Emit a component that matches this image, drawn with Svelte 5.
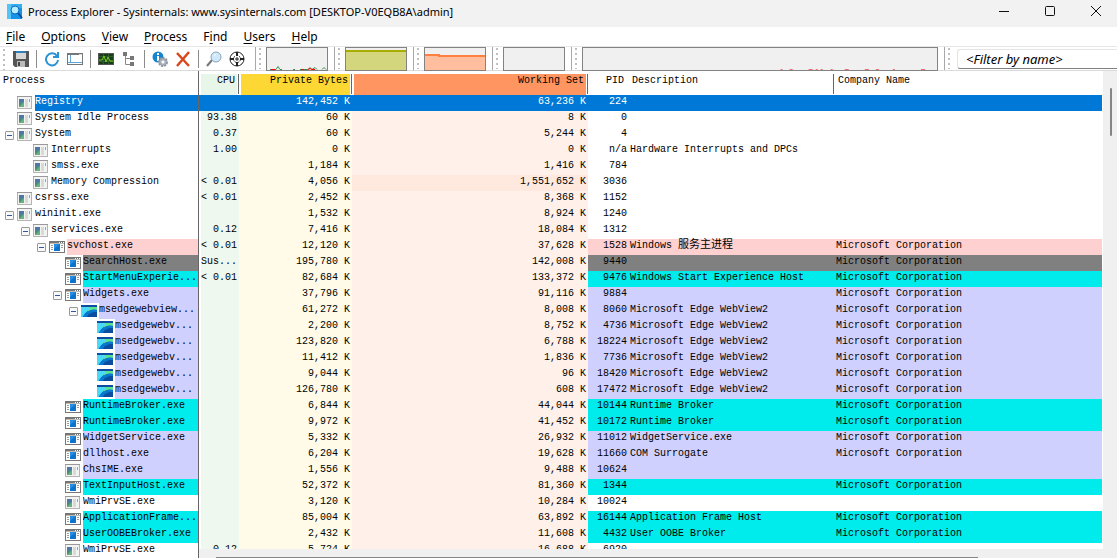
<script>
	const menus = ['File', 'Options', 'View', 'Process', 'Find', 'Users', 'Help'];
	// position of the underlined access key in each menu label
	const accessKey = { Find: 1 };

	const ms = 'Microsoft Corporation';
	const edge = 'Microsoft Edge WebView2';

	// depth, icon, name, cpu, private bytes, working set, pid, description, company, colour, open
	const processes = [
		[0, 'sys', 'Registry', '', '142,452', '63,236', '224', '', '', 'selected'],
		[0, 'sys', 'System Idle Process', '93.38', '60', '8', '0'],
		[0, 'sys', 'System', '0.37', '60', '5,244', '4', '', '', '', true],
		[1, 'sys', 'Interrupts', '1.00', '0', '0', 'n/a', 'Hardware Interrupts and DPCs'],
		[1, 'sys', 'smss.exe', '', '1,184', '1,416', '784'],
		[1, 'sys', 'Memory Compression', '< 0.01', '4,056', '1,551,652', '3036'],
		[0, 'sys', 'csrss.exe', '< 0.01', '2,452', '8,368', '1152'],
		[0, 'sys', 'wininit.exe', '', '1,532', '8,924', '1240', '', '', '', true],
		[1, 'sys', 'services.exe', '0.12', '7,416', '18,084', '1312', '', '', '', true],
		[2, 'app', 'svchost.exe', '< 0.01', '12,120', '37,628', '1528', 'Windows', ms, 'service', true, '服务主进程'],
		[3, 'app', 'SearchHost.exe', 'Sus...', '195,780', '142,008', '9440', '', ms, 'suspended'],
		[3, 'app', 'StartMenuExperie...', '< 0.01', '82,684', '133,372', '9476', 'Windows Start Experience Host', ms, 'immersive'],
		[3, 'app', 'Widgets.exe', '', '37,796', '91,116', '9884', '', ms, 'own', true],
		[4, 'edge', 'msedgewebview...', '', '61,272', '8,008', '8060', edge, ms, 'own', true],
		[5, 'edge', 'msedgewebv...', '', '2,200', '8,752', '4736', edge, ms, 'own'],
		[5, 'edge', 'msedgewebv...', '', '123,820', '6,788', '18224', edge, ms, 'own'],
		[5, 'edge', 'msedgewebv...', '', '11,412', '1,836', '7736', edge, ms, 'own'],
		[5, 'edge', 'msedgewebv...', '', '9,044', '96', '18420', edge, ms, 'own'],
		[5, 'edge', 'msedgewebv...', '', '126,780', '608', '17472', edge, ms, 'own'],
		[3, 'app', 'RuntimeBroker.exe', '', '6,844', '44,044', '10144', 'Runtime Broker', ms, 'immersive'],
		[3, 'app', 'RuntimeBroker.exe', '', '9,972', '41,452', '10172', 'Runtime Broker', ms, 'immersive'],
		[3, 'app', 'WidgetService.exe', '', '5,332', '26,932', '11012', 'WidgetService.exe', ms, 'own'],
		[3, 'app', 'dllhost.exe', '', '6,204', '19,628', '11660', 'COM Surrogate', ms, 'own'],
		[3, 'sys', 'ChsIME.exe', '', '1,556', '9,488', '10624', '', '', 'own'],
		[3, 'app', 'TextInputHost.exe', '', '52,372', '81,360', '1344', '', ms, 'immersive'],
		[3, 'sys', 'WmiPrvSE.exe', '', '3,120', '10,284', '10024'],
		[3, 'app', 'ApplicationFrame...', '', '85,004', '63,892', '16144', 'Application Frame Host', ms, 'immersive'],
		[3, 'app', 'UserOOBEBroker.exe', '', '2,432', '11,608', '4432', 'User OOBE Broker', ms, 'immersive'],
		[3, 'sys', 'WmiPrvSE.exe', '0.12', '5,724', '16,688', '6920']
	].map(([depth, icon, name, cpu, priv, ws, pid, desc = '', company = '', color = '', open = false, local = '']) => ({
		depth, icon, name, cpu, priv, ws, pid, desc, company, color, open, local
	}));

	let filter = $state('');
</script>

{#snippet processIcon(kind)}
	<svg class="proc-icon" width="16" height="16" aria-hidden="true">
		{#if kind === 'sys'}
			<rect x="0.5" y="1.5" width="14" height="12" fill="#f3f3f3" stroke="#b4b4b4" />
			<path d="M0 1.5h15" stroke="#999" />
			<rect x="2" y="4" width="5" height="8" fill="#4b8f83" />
			<path d="M2 4h5v2L2 9z" fill="#5078a4" />
			<path d="M2 12l5-5v5z" fill="#69b17b" />
			<rect x="8" y="4" width="3" height="8" fill="#d9d9d9" />
			<path d="M12.5 4v3" stroke="#87b3a2" />
		{:else if kind === 'app'}
			<rect x="0.5" y="2.5" width="15" height="11" fill="#fff" stroke="#777" />
			<path d="M0 3.5h16" stroke="#777" stroke-width="2" />
			<path d="M10 3.5h1M12 3.5h1M14 3.5h1" stroke="#fff" />
			<path d="M2 6.5h2M2 8.5h2M2 10.5h2M12 6.5h2M12 8.5h2" stroke="#999" />
			<rect x="5" y="5" width="6" height="7" fill="#0d73cf" />
			<path d="M5 5h6L5 10z" fill="#258de0" />
		{:else}
			<rect y="2" width="16" height="12" fill="#0c4da2" />
			<path d="M0 4h16v3C9 5 5 9 2 14H0z" fill="#35c1f1" />
			<path d="M7 4h9v3c-4-1-7 0-9 2z" fill="#5ee08c" />
			<path d="M0 4h7l3 2C6 7 3 10 1 14H0z" fill="#4bd9f5" />
			<path d="M2 14C5 8 10 6 16 7v2C10 9 7 11 6 14z" fill="#0878d1" />
		{/if}
	</svg>
{/snippet}

{#snippet grip()}
	<svg class="grip" width="2" height="22" aria-hidden="true">
		<path d="M1 1v22" stroke="#bfbfbf" stroke-width="2" stroke-dasharray="2 3" />
	</svg>
{/snippet}

<div class="window">
	<header class="titlebar">
		<svg width="16" height="16" aria-hidden="true">
			<rect width="15" height="15" y="1" fill="#1593e6" />
			<path d="M0 1h4v15H0z" fill="#52c4f5" />
			<path d="M4 1h11v4H4z" fill="#35aef0" />
			<circle cx="8" cy="7" r="4" fill="#b8ecff" stroke="#096bc0" stroke-width="1" />
			<path d="M11 10l4 5" stroke="#064f9f" stroke-width="2" />
		</svg>
		<h1>Process Explorer - Sysinternals: www.sysinternals.com [DESKTOP-V0EQB8A\admin]</h1>
		<div class="controls">
			<button aria-label="Minimize"><svg width="12" height="12"><path d="M1 6.5h10" /></svg></button>
			<button aria-label="Maximize"><svg width="12" height="12"><rect x="1.5" y="1.5" width="9" height="9" rx="1" /></svg></button>
			<button aria-label="Close"><svg width="12" height="12"><path d="M1 1l10 10M11 1L1 11" /></svg></button>
		</div>
	</header>

	<nav class="menubar">
		{#each menus as menu}
			{@const k = accessKey[menu] ?? 0}
			<button>{menu.slice(0, k)}<u>{menu[k]}</u>{menu.slice(k + 1)}</button>
		{/each}
	</nav>

	<div class="toolbar">
		<div class="tools">
			{@render grip()}
			<button class="first" aria-label="Save">
				<svg width="16" height="16">
					<path d="M0 0h16v16H2l-2-2z" fill="#555" />
					<rect x="3" width="10" height="8" fill="#d6d6d6" />
					<path d="M3 1h10" stroke="#2f7fb8" stroke-width="2" />
					<path d="M4 10h8v6H4z" fill="#bbb" />
					<path d="M5 11h2v4H5z" fill="#444" />
				</svg>
			</button>
			<span class="sep"></span>
			<button aria-label="Refresh now">
				<svg width="16" height="16" fill="none" stroke="#2a93d5" stroke-width="2">
					<path d="M13 5A6 6 0 1 0 14 9" />
					<path d="M14 1v5H9" />
				</svg>
			</button>
			<button aria-label="Show lower pane">
				<svg width="16" height="16">
					<rect x="0.5" y="2.5" width="15" height="11" fill="#fff" stroke="#777" />
					<path d="M0 3h16" stroke="#777" stroke-width="2" />
					<path d="M12 3.5h3" stroke="#ddd" />
					<path d="M1 11.5h14M3.5 4v7" stroke="#59a7dc" />
				</svg>
			</button>
			<span class="sep"></span>
			<button aria-label="System information">
				<svg width="16" height="16">
					<rect x="0.5" y="2.5" width="15" height="11" fill="#193e19" stroke="#555" />
					<path d="M1 5.5h14M1 10.5h14M5.5 3v10M10.5 3v10" stroke="#315b31" />
					<path d="M1 9h3l2-4 2 6 2-5 2 4h3" fill="none" stroke="#73d11c" />
				</svg>
			</button>
			<button aria-label="Show process tree">
				<svg width="16" height="16">
					<path d="M4.5 3v10.5H9M4.5 7.5H9" fill="none" stroke="#888" />
					<path d="M2 1h4v4H2zM9 5h4v4H9zM9 11h4v4H9z" fill="#777" />
				</svg>
			</button>
			<span class="sep"></span>
			<button aria-label="Properties">
				<svg width="16" height="16">
					<circle cx="6" cy="6" r="5.5" fill="#1684cf" />
					<path d="M6 2v2M6 5v5" stroke="#fff" stroke-width="2" />
					<circle cx="11" cy="11" r="4" fill="#aab2bb" stroke="#8f99a4" stroke-width="2" stroke-dasharray="2 1" />
					<circle cx="11" cy="11" r="1.5" fill="#fff" />
				</svg>
			</button>
			<button aria-label="Kill process">
				<svg width="16" height="16">
					<path d="M2 2l12 13M14 1L2 15" stroke="#d9481c" stroke-width="2.5" />
				</svg>
			</button>
			<span class="sep"></span>
			<button aria-label="Find handle or DLL">
				<svg width="16" height="16">
					<path d="M1 15l5-6" stroke="#777" stroke-width="2" />
					<circle cx="10" cy="6" r="5" fill="#cfe9fb" stroke="#88a5bb" />
					<path d="M8 5l2-2" stroke="#fff" />
				</svg>
			</button>
			<button aria-label="Find window's process">
				<svg width="16" height="16" fill="none" stroke="#222">
					<circle cx="8" cy="8" r="7" />
					<circle cx="8" cy="8" r="3.5" stroke-dasharray="2 1" />
					<path d="M8 1v4M8 11v4M1 8h4M11 8h4" stroke-width="2" />
					<path d="M6 8h4M8 6v4" />
				</svg>
			</button>
		</div>

		<div class="band">
			{@render grip()}
			<svg class="graph" width="60" height="22" role="img" aria-label="CPU usage">
				<path d="M3 21.5h6l2-3 2 3h2M26 21.5h2M33 21.5h8l2-2 2 2 3-2 2 2M55 21.5l2-2 2 2" fill="none" stroke="#3c8e4a" />
				<path d="M4 21.5h4M34 21.5h3M41 21.5l2-1 2 1h3" fill="none" stroke="#f00" />
			</svg>
		</div>
		<div class="band">
			{@render grip()}
			<svg class="graph" width="60" height="22" role="img" aria-label="System commit">
				<rect y="3" width="60" height="19" fill="#d4d67d" />
				<path d="M0 3h60" stroke="#aaad00" stroke-width="2" />
			</svg>
		</div>
		<div class="band">
			{@render grip()}
			<svg class="graph" width="60" height="22" role="img" aria-label="Physical memory">
				<path d="M0 7h14v1h46v14H0z" fill="#ffbe9e" />
				<path d="M0 7h14v1h46" fill="none" stroke="#ff8040" stroke-width="2" />
			</svg>
		</div>
		<div class="band">
			{@render grip()}
			<svg class="graph" width="60" height="22" role="img" aria-label="I/O"></svg>
		</div>
		<div class="band wide">
			{@render grip()}
			<svg class="graph" viewBox="0 0 353 22" preserveAspectRatio="none" role="img" aria-label="GPU usage">
				<path d="M197 21.5h2M206 21.5h3M225 21.5h4M232 21.5h2M237 21.5h2M247 21.5h2M261 21.5h4M281 21.5h4M292 21.5h3M309 21.5h2M337 21.5h4" stroke="#f26c6c" />
			</svg>
		</div>
		<div class="band">
			{@render grip()}
			<input type="text" placeholder="<Filter by name>" aria-label="Filter by name" bind:value={filter} />
		</div>
	</div>

	<main class="panes">
		<section class="tree-pane">
			<table>
				<thead>
					<tr><th><div class="head"><span>Process</span></div></th></tr>
				</thead>
				<tbody>
					{#each processes as p}
						<tr class={p.color}>
							<td>
								<div class="node" style:padding-left="{p.depth * 16 + 5}px">
									<span class="slot">
										{#if p.open}
											<button class="expander" aria-label="Collapse {p.name}">
												<svg width="9" height="9"><path d="M2 4.5h5" stroke="#3158a6" /></svg>
											</button>
										{/if}
									</span>
									{@render processIcon(p.icon)}
									<span class="name">{p.name}</span>
								</div>
							</td>
						</tr>
					{/each}
				</tbody>
			</table>
		</section>

		<section class="detail-pane">
			<div class="detail-view">
				<table>
					<colgroup>
						<col class="c-cpu" />
						<col class="c-priv" />
						<col class="c-ws" />
						<col class="c-pid" />
						<col class="c-desc" />
						<col />
					</colgroup>
					<thead>
						<tr>
							<th class="num cpu"><div class="head line"><span>CPU</span></div></th>
							<th class="num priv"><div class="head line"><span>Private Bytes</span></div></th>
							<th class="num ws"><div class="head line"><span>Working Set</span></div></th>
							<th class="num"><div class="head pid"><span>PID</span></div></th>
							<th><div class="head line"><span>Description</span></div></th>
							<th><div class="head"><span>Company Name</span></div></th>
						</tr>
					</thead>
					<tbody>
						{#each processes as p}
							<tr class={p.color}>
								<td class="num cpu">{p.cpu}</td>
								<td class="num priv">{p.priv} K</td>
								<td class="num ws" class:hot={p.ws.length > 7}>{p.ws} K</td>
								<td class="num pid">{p.pid}</td>
								<td>{p.desc}{#if p.local}{' '}<span class="cjk" lang="zh-CN">{p.local}</span>{/if}</td>
								<td>{p.company}</td>
							</tr>
						{/each}
					</tbody>
				</table>
			</div>
			<div class="hscroll"><div class="thumb"></div></div>
		</section>
		<div class="vscroll"><div class="thumb"></div></div>
	</main>
</div>

<style>
	:global(body) {
		margin: 0;
		overflow: hidden;
	}

	.window {
		display: flex;
		flex-direction: column;
		height: 100vh;
		background: #fff;
		color: #000;
		font-family: 'Noto Sans', 'Open Sans', sans-serif;
	}

	button {
		padding: 0;
		border: 0;
		background: none;
		color: inherit;
		font: inherit;
	}

	svg {
		display: block;
		flex: none;
	}

	.titlebar {
		display: flex;
		flex: none;
		align-items: center;
		height: 27px;
		padding-left: 7px;
		background: #f2f2f2;
	}

	.titlebar > svg {
		margin-bottom: 6px;
	}

	h1 {
		flex: 1;
		margin: 0 0 3px 5px;
		font-size: 11px;
		font-weight: 400;
		line-height: 20px;
		white-space: nowrap;
	}

	.controls {
		display: flex;
		gap: 4px;
		align-self: flex-start;
	}

	.controls button {
		display: grid;
		place-items: center;
		width: 42px;
		height: 22px;
	}

	.controls svg {
		fill: none;
		stroke: #111;
	}

	.menubar {
		display: flex;
		flex: none;
		gap: 16px;
		height: 19px;
		padding-left: 6px;
		border-bottom: 1px solid #e6e6e6;
		font-size: 12px;
		line-height: 19px;
	}

	u {
		text-underline-offset: 2px;
	}

	.toolbar {
		display: flex;
		flex: none;
		height: 23px;
		border-bottom: 1px solid #dadada;
	}

	.tools {
		display: flex;
		flex: none;
		gap: 7px;
		align-items: center;
		width: 252px;
		padding-left: 3px;
	}

	.tools .first {
		margin-left: 1px;
	}

	.sep {
		width: 1px;
		height: 18px;
		background: #8c8c8c;
	}

	.band {
		display: flex;
		flex: none;
		width: 73px;
		padding-left: 3px;
		margin-right: 2px;
		border-left: 1px solid #a8a8ac;
		gap: 5px;
	}

	.band.wide {
		flex: 1;
	}

	.graph {
		box-sizing: border-box;
		width: 62px;
		height: 24px;
		border: 1px solid #838383;
		background: #f0f0f0;
	}

	.wide .graph {
		flex: 1;
		width: auto;
		min-width: 0;
		margin-right: 4px;
	}

	.band:last-child {
		width: 169px;
		margin-right: 0;
	}

	.band input {
		box-sizing: border-box;
		flex: 1;
		min-width: 0;
		height: 20px;
		margin: 2px 0 0 2px;
		padding: 0 8px;
		border: 1px solid #e4e4e4;
		border-right: 0;
		border-bottom-color: #808080;
		border-radius: 3px 0 0 3px;
		outline: none;
		font: italic 13px 'Noto Sans', sans-serif;
	}

	.band input::placeholder {
		color: #000;
		opacity: 1;
	}

	.panes {
		display: flex;
		flex: 1;
		min-height: 0;
		font-family: 'Liberation Mono', 'Noto Sans CJK SC', monospace;
		font-size: 10px;
		line-height: 14px;
	}

	table {
		width: 100%;
		border-collapse: collapse;
		table-layout: fixed;
	}

	th,
	td {
		padding: 0;
		font-weight: 400;
		text-align: left;
		vertical-align: top;
		white-space: pre;
	}

	.head {
		display: flex;
		box-sizing: border-box;
		height: 24px;
		padding: 3px 0 0 2px;
	}

	.head span {
		flex: 1;
		padding: 0 2px;
	}

	.head.line {
		padding-right: 1px;
		background: linear-gradient(#666, #666) right 3px / 1px 20px no-repeat;
	}

	.head.line span {
		margin-right: 1px;
	}

	.head.pid {
		padding-right: 2px;
	}

	th.cpu span {
		background: #e8f5e9;
	}

	th.priv span {
		background: #fdd835;
	}

	th.ws span {
		background: #ff9560;
	}

	.tree-pane {
		flex: none;
		width: 198px;
		overflow: hidden;
		border-right: 1px solid #666;
	}

	.tree-pane .head {
		padding-left: 1px;
	}

	.node {
		display: flex;
		height: 16px;
	}

	.slot {
		flex: none;
		width: 12px;
	}

	.expander {
		display: block;
		width: 9px;
		height: 9px;
		margin-top: 4px;
		border-radius: 1px;
		outline: 1px solid #999;
		outline-offset: -1px;
		background: #f8f8f8;
	}

	.proc-icon {
		margin-right: 2px;
	}

	.name {
		flex: 1;
		overflow: hidden;
	}

	.detail-pane {
		display: flex;
		flex: 1;
		flex-direction: column;
		min-width: 0;
	}

	.detail-view {
		flex: 1;
		min-height: 0;
		margin-right: 1px;
		overflow: hidden;
	}

	.detail-view td {
		height: 16px;
		padding: 0 2px;
	}

	.detail-view .num {
		text-align: right;
	}

	.detail-view td.pid {
		padding-right: 1px;
	}

	.c-cpu,
	.c-pid {
		width: 40px;
	}

	.c-priv {
		width: 113px;
	}

	.c-ws {
		width: 236px;
	}

	.c-desc {
		width: 206px;
	}

	td.cpu {
		background: linear-gradient(#eef8ef, #eef8ef) 2px 0 no-repeat #fff;
	}

	td.priv {
		background: #fffbe8;
	}

	td.ws {
		background: #fff0e9;
	}

	td.hot {
		background: #ffe9de;
	}

	.cjk {
		font-family: 'Noto Sans CJK SC', sans-serif;
		font-size: 11px;
		line-height: 1px;
	}

	/* row highlight colours; the graph-tinted columns keep their own tint */
	.service .name,
	.service td:nth-child(n + 4) {
		background: #ffd0d0;
	}

	.suspended .name,
	.suspended td:nth-child(n + 4) {
		background: #808080;
	}

	.immersive .name,
	.immersive td:nth-child(n + 4) {
		background: #00ebeb;
	}

	.own .name,
	.own td:nth-child(n + 4) {
		background: #d0d0ff;
	}

	.selected .name,
	.detail-view .selected td {
		background: #0078d7;
		color: #fff;
	}

	.hscroll {
		flex: none;
		box-sizing: border-box;
		height: 9px;
		padding: 8px 125px 0 17px;
		background: #f0f0f0;
	}

	.hscroll .thumb {
		height: 1px;
		background: #858585;
	}

	.vscroll {
		flex: none;
		box-sizing: border-box;
		width: 14px;
		padding: 17px 5px 0 7px;
		background: #f0f0f0;
	}

	.vscroll .thumb {
		width: 2px;
		height: 48px;
		border-radius: 1px;
		background: #858585;
	}
</style>
